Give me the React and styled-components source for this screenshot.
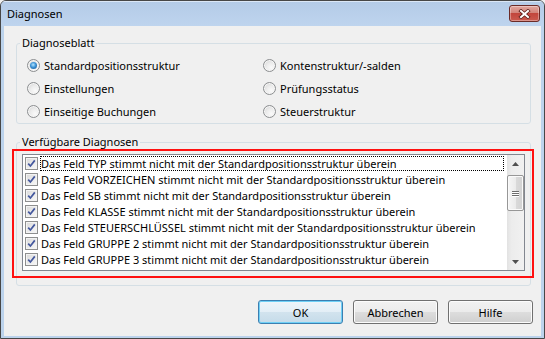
import React from "react";
import styled, { createGlobalStyle } from "styled-components";

// Dialog "Diagnosen" im Windows-7-Basic-Look
const GlobalStyle = createGlobalStyle`
  html, body {
    margin: 0;
    padding: 0;
    background: #f0f0f0;
  }
  body {
    font-family: "Noto Sans", "Segoe UI", sans-serif;
    font-size: 11px;
    color: #000;
  }
`;

const Window = styled.div`
  box-sizing: border-box;
  width: 545px;
  height: 339px;
  border: 1px solid #474747;
  border-radius: 6px 6px 0 0;
  background: #bcd3ec;
  display: flex;
  flex-direction: column;
  overflow: hidden;
`;

const TitleBar = styled.div`
  height: 25px;
  flex: none;
  display: flex;
  justify-content: space-between;
  align-items: flex-start;
  background: linear-gradient(#b4cbe7, #bed4ee);
  box-shadow: inset 0 1px 0 #dbe7f6;
`;

const Title = styled.div`
  padding: 1px 0 0 6px;
  line-height: 24px;
`;

const CloseButton = styled.div`
  width: 31px;
  height: 17px;
  box-sizing: border-box;
  margin: 4px 4px 0 0;
  border: 1px solid #6b2b27;
  border-radius: 3px;
  background: linear-gradient(#e2a79f 0%, #d3847a 45%, #c2463c 50%, #cb5a4f 100%);
  box-shadow: inset 0 0 0 1px rgba(255, 255, 255, 0.35);
  display: flex;
  align-items: center;
  justify-content: center;
`;

const Client = styled.div`
  flex: 1;
  margin: 0 3px 2px;
  background: #f0f0f0;
  padding: 10px 10px 0 12px;
  display: flex;
  flex-direction: column;
`;

const GroupBox = styled.fieldset`
  margin: ${(p) => p.$mt || 0}px 0 0;
  padding: 0;
  min-width: 0;
  border: 1px solid #d5dfe5;
  border-radius: 3px;
`;

const Legend = styled.legend`
  margin-left: 3px;
  padding: 0 2px;
  line-height: 14px;
`;

const RadioGrid = styled.div`
  display: grid;
  grid-template-columns: 236px 1fr;
  grid-auto-rows: 23px;
  padding: 4px 0 0 10px;
`;

const RadioOption = styled.label`
  display: flex;
  align-items: center;
  gap: 4px;
  white-space: nowrap;
  line-height: 14px;
`;

const RadioCircle = styled.span`
  flex: none;
  width: 13px;
  height: 13px;
  box-sizing: border-box;
  border-radius: 50%;
  border: 1px solid #8c8e90;
  background: radial-gradient(circle at 65% 70%, #fafafa 0%, #ececec 45%, #cfcfcf 100%);
  box-shadow: inset 0 0 0 1px #f6f6f6;
  display: flex;
  align-items: center;
  justify-content: center;

  &::after {
    content: "";
    display: ${(p) => (p.$checked ? "block" : "none")};
    width: 7px;
    height: 7px;
    border-radius: 50%;
    background: radial-gradient(circle at 45% 40%, #b6e6ff 0%, #3d93d6 45%, #15508c 100%);
  }
`;

const Body = styled.div`
  padding: 5px 5px 14px;
`;

const Highlight = styled.div`
  margin: -5px -9px -7px -10px;
  padding: 3px 7px 5px 8px;
  border: 2px solid #ff1010;
`;

const ListBox = styled.div`
  display: flex;
  height: 117px;
  box-sizing: border-box;
  border: 1px solid #828790;
  background: #fff;
`;

const Items = styled.div`
  flex: 1;
  min-width: 0;
`;

const Item = styled.div`
  display: flex;
  align-items: center;
  height: 16px;
  padding-left: 2px;
`;

const CheckBox = styled.span`
  flex: none;
  width: 13px;
  height: 13px;
  box-sizing: border-box;
  border: 1px solid #8e8f8f;
  background: linear-gradient(135deg, #d9d9d9, #f9f9f9);
  box-shadow: inset 0 0 0 1px #f3f3f3;
  display: flex;
  align-items: center;
  justify-content: center;
`;

const ItemText = styled.span`
  flex: 1;
  margin: 0 3px 0 2px;
  height: 15px;
  box-sizing: border-box;
  line-height: 13px;
  border: 1px dotted ${(p) => (p.$focused ? "#000" : "transparent")};
  white-space: nowrap;
  overflow: hidden;
`;

const ScrollBar = styled.div`
  flex: none;
  width: 17px;
  display: flex;
  flex-direction: column;
  background: linear-gradient(90deg, #e2e2e2 0%, #ececec 25%, #f1f1f1 100%);
`;

const ArrowButton = styled.div`
  height: 17px;
  flex: none;
  display: flex;
  align-items: center;
  justify-content: center;
`;

const Track = styled.div`
  flex: 1;
  padding-top: 3px;
`;

const Thumb = styled.div`
  height: 36px;
  box-sizing: border-box;
  border: 1px solid #979797;
  border-radius: 2px;
  background: linear-gradient(90deg, #f6f6f6 0%, #ebebeb 50%, #dadada 51%, #d2d2d2 100%);
  box-shadow: inset 0 0 0 1px #fafafa;
  display: flex;
  flex-direction: column;
  align-items: center;
  justify-content: center;
  gap: 1px;
`;

const Grip = styled.span`
  width: 7px;
  height: 1px;
  background: #6d6d6d;
  box-shadow: 0 1px 0 #fff;
`;

const ButtonRow = styled.div`
  display: flex;
  justify-content: flex-end;
  gap: 10px;
  margin: 14px -2px 0 0;
`;

const Button = styled.button`
  width: 85px;
  height: 24px;
  box-sizing: border-box;
  padding: 0;
  font: inherit;
  color: #000;
  border-radius: 3px;
  border: 1px solid ${(p) => (p.$default ? "#3c7fb1" : "#707070")};
  background: ${(p) =>
    p.$default
      ? "linear-gradient(#eef5fa 0%, #e3eef6 50%, #d2e3ee 51%, #c5dbe9 100%)"
      : "linear-gradient(#f2f2f2 0%, #ebebeb 50%, #dddddd 51%, #cfcfcf 100%)"};
  box-shadow: inset 0 0 0 1px ${(p) => (p.$default ? "#6fd0f6" : "#fcfcfc")};
`;

const radios = [
  { label: "Standardpositionsstruktur", checked: true },
  { label: "Kontenstruktur/-salden" },
  { label: "Einstellungen" },
  { label: "Prüfungsstatus" },
  { label: "Einseitige Buchungen" },
  { label: "Steuerstruktur" },
];

const felder = ["TYP", "VORZEICHEN", "SB", "KLASSE", "STEUERSCHLÜSSEL", "GRUPPE 2", "GRUPPE 3"];

const Check = () => (
  <svg width="9" height="9" viewBox="0 0 9 9">
    <path d="M1.2 4.6 L3.4 7 L7.8 1.4" fill="none" stroke="#44589e" strokeWidth="1.7" />
  </svg>
);

const Arrow = ({ up }) => (
  <svg width="7" height="4" viewBox="0 0 7 4">
    <polygon points={up ? "0,4 7,4 3.5,0" : "0,0 7,0 3.5,4"} fill="#4f4f4f" />
  </svg>
);

const App = () => {
  return (
    <>
      <GlobalStyle />
      <Window>
        <TitleBar>
          <Title>Diagnosen</Title>
          <CloseButton>
            <svg width="13" height="10" viewBox="0 0 13 10">
              <path d="M3 2 L10 8 M10 2 L3 8" stroke="#5b1f1a" strokeWidth="3.6" strokeLinecap="square" />
              <path d="M3 2 L10 8 M10 2 L3 8" stroke="#fff" strokeWidth="2" strokeLinecap="square" />
            </svg>
          </CloseButton>
        </TitleBar>
        <Client>
          <GroupBox>
            <Legend>Diagnoseblatt</Legend>
            <RadioGrid>
              {radios.map((r) => (
                <RadioOption key={r.label}>
                  <RadioCircle $checked={r.checked} />
                  {r.label}
                </RadioOption>
              ))}
            </RadioGrid>
          </GroupBox>

          <GroupBox $mt={11}>
            <Legend>Verfügbare Diagnosen</Legend>
            <Body>
              <Highlight>
                <ListBox>
                  <Items>
                    {felder.map((f, i) => (
                      <Item key={f}>
                        <CheckBox>
                          <Check />
                        </CheckBox>
                        <ItemText $focused={i === 0}>
                          Das Feld {f} stimmt nicht mit der Standardpositionsstruktur überein
                        </ItemText>
                      </Item>
                    ))}
                  </Items>
                  <ScrollBar>
                    <ArrowButton>
                      <Arrow up />
                    </ArrowButton>
                    <Track>
                      <Thumb>
                        <Grip />
                        <Grip />
                        <Grip />
                      </Thumb>
                    </Track>
                    <ArrowButton>
                      <Arrow />
                    </ArrowButton>
                  </ScrollBar>
                </ListBox>
              </Highlight>
            </Body>
          </GroupBox>

          <ButtonRow>
            <Button $default>OK</Button>
            <Button>Abbrechen</Button>
            <Button>Hilfe</Button>
          </ButtonRow>
        </Client>
      </Window>
    </>
  );
};

export default App;
